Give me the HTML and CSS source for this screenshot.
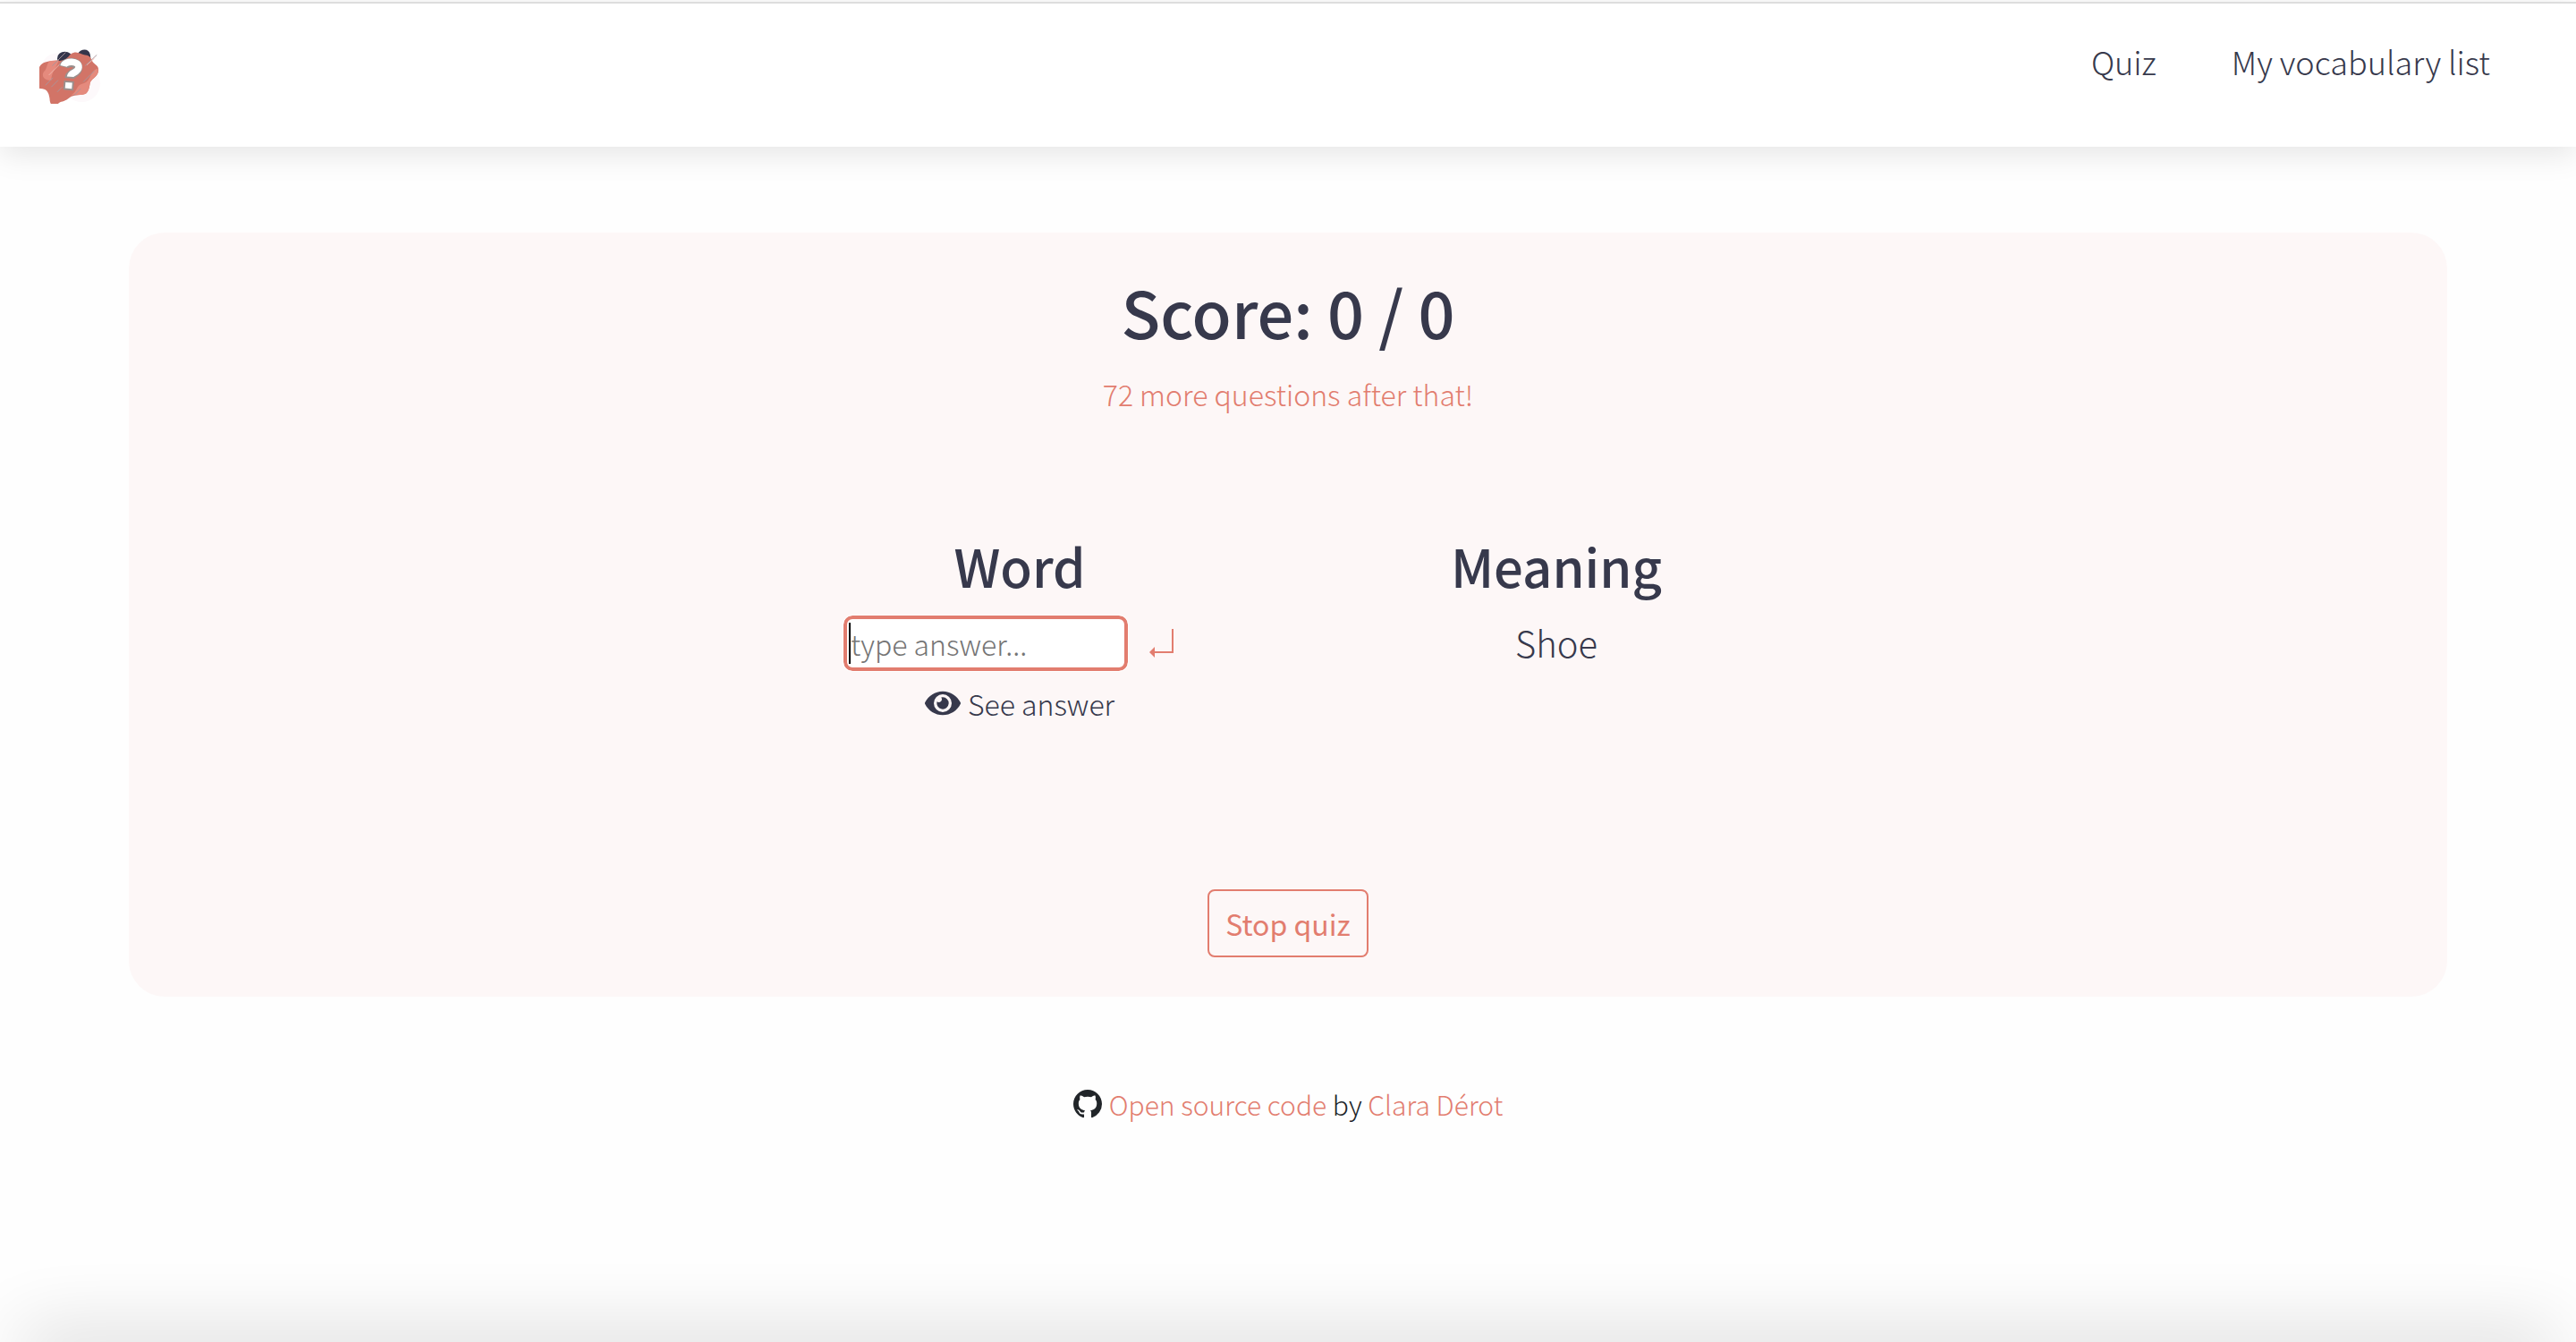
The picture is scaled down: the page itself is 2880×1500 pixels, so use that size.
FILE: index.html
```html
<!DOCTYPE html>
<html lang="en">
<head>
<meta charset="utf-8">
<meta name="viewport" content="width=device-width, initial-scale=1">
<title>Vocabulary quiz</title>
<link rel="stylesheet" href="styles.css">
</head>
<body>
<header class="navbar">
  <a class="brand" href="#" aria-label="Home">
    <svg class="logo" viewBox="0 0 72 68" aria-hidden="true">
      <g fill="#fdf9fb"><circle cx="18" cy="25" r="17"/><circle cx="48" cy="44" r="22"/></g>
      <g fill="#34364b">
        <ellipse cx="28" cy="14" rx="9" ry="8"/>
        <path d="M43 9c3-6 13-8 15 0 1 4 1 9-1 12z"/>
        <path d="M6 42c0 7 8 5 12 10 4 4 5 6 10 7 6 2 10-1 12-6L20 36z"/>
      </g>
      <path fill="#d27467" d="M22 17c8-1 9-4 13-8 7-5 11 0 17 1 6 0 7 4 9 8 3 4 7 4 7 10 0 8-7 9-10 15-1 6-2 14-9 14-7 1-12 0-17 5-5 4-9 3-12 6-7 5-10 0-10-6-1-8-4-12-11-12-6-1-9-5-6-11 5-7 3-9 5-15 3-6 10-7 24-7z"/>
      <path fill="#e58a7d" d="M12 17l9-1c-3 10-9 14-9 24H9c-6-1-9-5-6-10 5-4 3-13 9-13zM67 26c3 8-7 11-9 17-1 6-2 14-9 14-5 1-10-1-14 1 8-4 6-12 14-14 11-2 8-15 18-18z"/>
      <g stroke="#a8959c" stroke-width="1"><path d="M13 23 29 7M52 23 66 10M5 46l9-9M12 48l8-8M39 58l8-8M50 42l13-13M19 54l6-6"/></g>
      <g stroke="#f0b5ac" stroke-width="1"><path d="M9 34 25 18M54 22l9-8"/></g>
      <g transform="rotate(5 36 30)" fill="none">
        <path d="M26 25c1-7 17-9 17 0 0 7-9 6-9 13" stroke="#99908e" stroke-width="11"/>
        <path d="M29 42h10v9H29z" fill="#fff" stroke="#99908e" stroke-width="2"/>
        <path d="M26 24c1-7 18-8 18 0 0 7-9 6-9 12" stroke="#fff" stroke-width="8"/>
      </g>
    </svg>
  </a>
  <nav class="nav-links">
    <a href="#quiz">Quiz</a>
    <a href="#list">My vocabulary list</a>
  </nav>
</header>

<main class="quiz-card" id="quiz">
  <h1 class="score">Score: 0 / 0</h1>
  <p class="remaining">72 more questions after that!</p>
  <div class="question">
    <section class="column">
      <h2><label for="answer">Word</label></h2>
      <form class="answer-form">
        <div class="answer-field">
          <input class="answer-input" id="answer" type="text" placeholder="type answer..." autocomplete="off">
        </div>
        <button class="submit" type="button" aria-label="Submit answer">
          <svg viewBox="0 0 28 32" width="28" height="32" aria-hidden="true"><path d="M26 0v26H5" fill="none" stroke="#e27d6f" stroke-width="2"/><path d="M0 26l6-6v12z" fill="#e27d6f"/></svg>
        </button>
      </form>
      <button class="reveal" type="button">
        <svg viewBox="0 0 576 512" width="40" height="36" aria-hidden="true"><path fill="currentColor" d="M572.52 241.4C518.29 135.59 410.93 64 288 64S57.68 135.64 3.48 241.41a32.35 32.35 0 0 0 0 29.19C57.71 376.41 165.07 448 288 448s230.32-71.64 284.52-177.41a32.35 32.35 0 0 0 0-29.19zM288 400a144 144 0 1 1 144-144 143.93 143.93 0 0 1-144 144zm0-240a95.31 95.31 0 0 0-25.31 3.79 47.85 47.85 0 0 1-66.9 66.9A95.78 95.78 0 1 0 288 160z"/></svg>
        See answer
      </button>
    </section>
    <section class="column">
      <h2>Meaning</h2>
      <p class="meaning">Shoe</p>
    </section>
  </div>
  <button class="stop" type="button">Stop quiz</button>
</main>

<footer class="footer">
  <svg viewBox="0 0 16 16" width="32" height="32" aria-hidden="true"><path fill="currentColor" d="M8 0C3.58 0 0 3.58 0 8c0 3.54 2.29 6.53 5.47 7.59.4.07.55-.17.55-.38 0-.19-.01-.82-.01-1.49-2.01.37-2.53-.49-2.69-.94-.09-.23-.48-.94-.82-1.13-.28-.15-.68-.52-.01-.53.63-.01 1.08.58 1.23.82.72 1.21 1.87.87 2.33.66.07-.52.28-.87.51-1.07-1.78-.2-3.64-.89-3.64-3.95 0-.87.31-1.59.82-2.15-.08-.2-.36-1.02.08-2.12 0 0 .67-.21 2.2.82.64-.18 1.32-.27 2-.27s1.36.09 2 .27c1.53-1.04 2.2-.82 2.2-.82.44 1.1.16 1.92.08 2.12.51.56.82 1.27.82 2.15 0 3.07-1.87 3.75-3.65 3.95.29.25.54.73.54 1.48 0 1.07-.01 1.93-.01 2.2 0 .21.15.46.55.38A8.01 8.01 0 0 0 16 8c0-4.42-3.58-8-8-8z"/></svg>
  <p><a href="#source">Open source code</a> by <a href="#author">Clara Dérot</a></p>
</footer>
<div class="bottom-shade"></div>
</body>
</html>
```
FILE: styles.css
```css
:root {
  --ink: #37394c;
  --coral: #e27d6f;
}

* {
  box-sizing: border-box;
}

body {
  margin: 0;
  min-height: 100vh;
  background: #fefefe;
  color: var(--ink);
  font-family: "Source Sans Pro", "Noto Sans CJK SC", sans-serif;
  font-weight: 300;
  font-size: 32px;
  line-height: 48px;
}

h1, h2, p {
  margin: 0;
}

h1, h2 {
  font-weight: 500;
}

a {
  color: var(--coral);
  text-decoration: none;
}

button, input {
  font: inherit;
  color: inherit;
}

button {
  background: none;
  border: 0;
  padding: 0;
  cursor: pointer;
}

svg {
  display: block;
  flex: none;
}

.navbar {
  display: flex;
  justify-content: space-between;
  align-items: flex-start;
  margin-top: 2px;
  padding: 40px 96px 48px 44px;
  border-top: 2px solid #ddd;
  background: #fff;
  box-shadow: 0 8px 32px rgba(0, 0, 0, 0.1);
}

.brand {
  padding-top: 8px;
}

.logo {
  width: 72px;
  height: 64px;
}

.nav-links {
  display: flex;
  gap: 84px;
  font-size: 36px;
}

.nav-links a {
  color: var(--ink);
}

.quiz-card {
  display: flex;
  flex-direction: column;
  align-items: center;
  margin: 96px 5% 0;
  padding: 40px 40px 44px;
  border-radius: 40px;
  background: #fdf7f7;
}

.score {
  font-size: 72px;
  line-height: 96px;
}

.remaining {
  padding-top: 20px;
  color: var(--coral);
}

.question {
  display: flex;
  width: 100%;
  max-width: 1200px;
  padding: 120px 0 184px;
}

.column {
  display: flex;
  flex: 1;
  flex-direction: column;
  align-items: center;
}

.column h2 {
  font-size: 58px;
  line-height: 96px;
}

.answer-form {
  display: flex;
  align-items: center;
  margin-top: 8px;
}

.answer-field {
  position: relative;
}

.answer-field::before {
  content: "";
  position: absolute;
  top: 8px;
  left: 6px;
  width: 2px;
  height: 46px;
  background: #000;
}

.answer-input {
  display: block;
  width: 318px;
  height: 62px;
  padding: 0 4px;
  border: 4px solid var(--coral);
  border-radius: 10px;
  outline: 1px solid #fff;
  background: #fff;
}

.answer-input::placeholder {
  color: #757575;
  opacity: 1;
}

.submit {
  padding: 0 24px;
}

.reveal {
  display: flex;
  align-items: center;
  gap: 8px;
  margin-top: 12px;
}

.meaning {
  margin-top: 14px;
  font-size: 40px;
}

.stop {
  padding: 12px 18px;
  border: 2px solid var(--coral);
  border-radius: 8px;
  color: var(--coral);
  font-weight: 400;
}

.footer {
  display: flex;
  justify-content: center;
  align-items: center;
  gap: 8px;
  padding: 96px 24px;
  color: #212529;
  font-size: 30px;
}

.bottom-shade {
  position: fixed;
  right: 48px;
  bottom: 0;
  left: 48px;
  box-shadow: 0 12px 80px 24px rgba(0, 0, 0, 0.16);
}
```
